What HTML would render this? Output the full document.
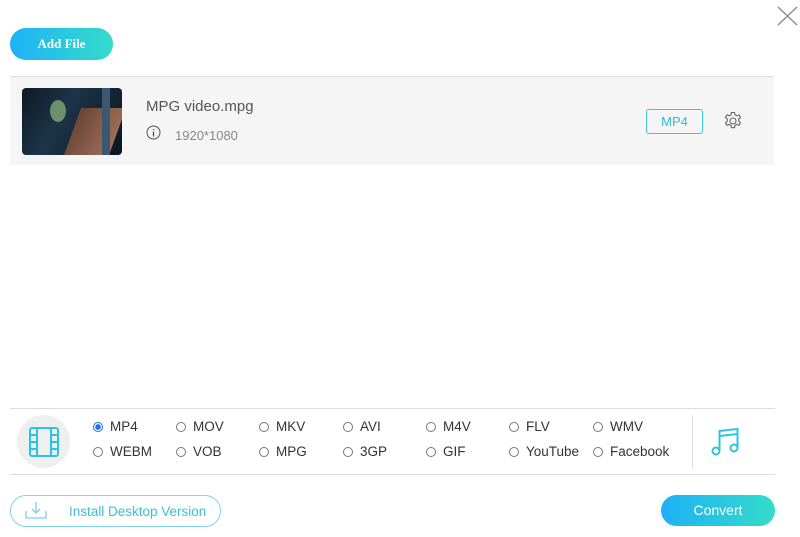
<!DOCTYPE html>
<html><head><style>
body{margin:0;width:800px;height:537px;background:#fff;font-family:"Liberation Sans",sans-serif;position:relative;overflow:hidden}
.a{position:absolute}
.grad{background:linear-gradient(90deg,#1fb1f7,#33dcc9);color:#fff;border-radius:17px;text-align:center}
.r{position:absolute;font-size:13.5px;color:#333;display:flex;align-items:center}
.r i{display:inline-block;width:10px;height:10px;border:1px solid #777;border-radius:50%;margin-right:7px;box-sizing:border-box}
.r i.on{border-color:#1a73e8;background:radial-gradient(circle,#1a73e8 0 2.6px,#fff 3px)}
</style></head><body>
<svg class="a" style="left:777px;top:6px" width="21" height="20"><path d="M1 1L20 19M20 1L1 19" stroke="#888" stroke-width="1.3"/></svg>
<div class="a grad" style="left:10px;top:28px;width:103px;height:32px;line-height:32px;font-family:'Liberation Serif',serif;font-weight:bold;font-size:13px">Add File</div>
<div class="a" style="left:10px;top:76px;width:764px;height:88px;background:#f5f5f5;border-top:1px solid #ddd"></div>
<div class="a" style="left:22px;top:88px;width:100px;height:67px;border-radius:4px;background:linear-gradient(120deg,#0d1a26,#1d3448 40%,#0a1520);overflow:hidden">
<div class="a" style="left:50px;top:20px;width:45px;height:50px;background:linear-gradient(100deg,#6b4536,#a0715a);transform:skewX(-20deg)"></div>
<div class="a" style="left:28px;top:12px;width:16px;height:22px;background:#6d8f6a;border-radius:50%"></div>
<div class="a" style="left:80px;top:0;width:8px;height:67px;background:#3a5870"></div>
</div>
<div class="a" style="left:146px;top:98px;font-size:15px;color:#555">MPG video.mpg</div>
<svg class="a" style="left:146px;top:125px" width="15" height="15"><circle cx="7.5" cy="7.5" r="6.5" fill="none" stroke="#555"/><path d="M7.5 6.5V11.5M7.5 4V5" stroke="#555" stroke-width="1.3"/></svg>
<div class="a" style="left:175px;top:128px;font-size:13px;color:#888">1920*1080</div>
<div class="a" style="left:646px;top:109px;width:55px;height:23px;border:1px solid #3ec7d9;border-radius:3px;color:#2fbcd6;font-size:13px;text-align:center;line-height:23px">MP4</div>
<svg class="a" style="left:723px;top:111px" width="20" height="20" viewBox="0 0 20 20"><path d="M8.5 1.5h3l.5 2.3 1.8 1 2.2-.9 1.5 2.6-1.8 1.6v2l1.8 1.6-1.5 2.6-2.2-.9-1.8 1-.5 2.3h-3l-.5-2.3-1.8-1-2.2.9-1.5-2.6 1.8-1.6v-2L2.5 6.5 4 3.9l2.2.9 1.8-1z" fill="none" stroke="#666" stroke-width="1.1"/><circle cx="10" cy="10" r="3" fill="none" stroke="#666" stroke-width="1.1"/></svg>
<div class="a" style="left:10px;top:408px;width:765px;height:1px;background:#ddd"></div>
<div class="a" style="left:10px;top:474px;width:765px;height:1px;background:#ddd"></div>
<div class="a" style="left:17px;top:415px;width:53px;height:53px;border-radius:50%;background:#eef0f0"></div>
<svg class="a" style="left:29px;top:427px" width="30" height="30" viewBox="0 0 30 30"><g fill="none" stroke="#2cc4e2" stroke-width="2"><rect x="1" y="1" width="28" height="28" rx="2"/><path d="M8 1v28M22 1v28M1 8h7M1 15h7M1 22h7M22 8h7M22 15h7M22 22h7"/></g></svg>
<div class="r" style="left:93px;top:419px"><i class="on"></i>MP4</div>
<div class="r" style="left:176px;top:419px"><i></i>MOV</div>
<div class="r" style="left:259px;top:419px"><i></i>MKV</div>
<div class="r" style="left:343px;top:419px"><i></i>AVI</div>
<div class="r" style="left:426px;top:419px"><i></i>M4V</div>
<div class="r" style="left:509px;top:419px"><i></i>FLV</div>
<div class="r" style="left:593px;top:419px"><i></i>WMV</div>
<div class="r" style="left:93px;top:444px"><i></i>WEBM</div>
<div class="r" style="left:176px;top:444px"><i></i>VOB</div>
<div class="r" style="left:259px;top:444px"><i></i>MPG</div>
<div class="r" style="left:343px;top:444px"><i></i>3GP</div>
<div class="r" style="left:426px;top:444px"><i></i>GIF</div>
<div class="r" style="left:509px;top:444px"><i></i>YouTube</div>
<div class="r" style="left:593px;top:444px"><i></i>Facebook</div>
<div class="a" style="left:692px;top:415px;width:1px;height:54px;background:#ddd"></div>
<svg class="a" style="left:710px;top:427px" width="30" height="30" viewBox="0 0 30 30"><g fill="none" stroke="#2cc4e2" stroke-width="2"><circle cx="6" cy="24" r="3.5"/><circle cx="24" cy="21" r="3.5"/><path d="M9.5 24V4L27.5 2V21M9.5 9L27.5 7"/></g></svg>
<div class="a" style="left:10px;top:495px;width:209px;height:30px;border:1px solid #7fd6e6;border-radius:16px"></div>
<svg class="a" style="left:25px;top:501px" width="22" height="18" viewBox="0 0 22 18"><g fill="none" stroke="#7ccfe0" stroke-width="1.3"><path d="M1 10v7h20v-7M11 1v11M7 8l4 4 4-4"/></g></svg>
<div class="a" style="left:69px;top:504px;font-size:13.5px;color:#3bbfd6">Install Desktop Version</div>
<div class="a grad" style="left:661px;top:495px;width:114px;height:31px;line-height:31px;font-size:14px;border-radius:16px">Convert</div>
</body></html>
